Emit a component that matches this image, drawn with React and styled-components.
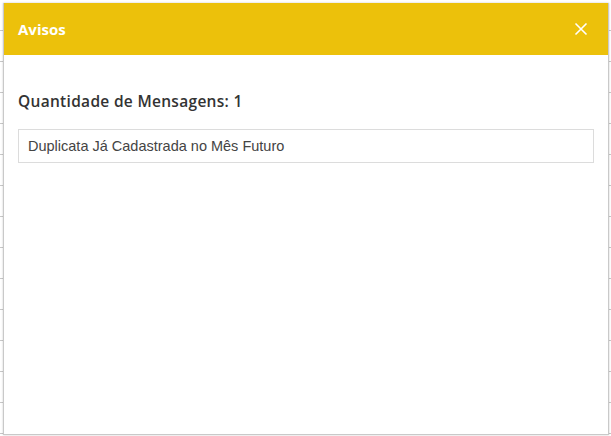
import React from 'react'
import styled, { createGlobalStyle } from 'styled-components'

const Global = createGlobalStyle`
  html, body {
    margin: 0;
    padding: 0;
    background: #ffffff;
  }
  * { box-sizing: border-box; }
`;

const Backdrop = styled.div`
  width: 611px;
  height: 436px;
  padding: 3px 2px 1px 3px;
  background: repeating-linear-gradient(
    to bottom,
    #ffffff 0px,
    #ffffff 30px,
    #c8c8c8 30px,
    #c8c8c8 31px
  );
`;

const Modal = styled.div`
  height: 100%;
  display: flex;
  flex-direction: column;
  background: #ffffff;
  border: 1px solid #c9c9c9;
  border-top: none;
  box-shadow: 0 0 2px rgba(0, 0, 0, 0.2);
`;

const Header = styled.div`
  height: 52px;
  flex: none;
  display: flex;
  align-items: center;
  justify-content: space-between;
  padding: 0 20px 0 14px;
  background: #ecc10b;
`;

const Title = styled.h4`
  margin: 0;
  font-family: "Open Sans", "Liberation Sans", sans-serif;
  font-weight: 700;
  font-size: 15px;
  color: #ffffff;
`;

const Close = styled.button`
  border: none;
  background: transparent;
  padding: 0;
  width: 14px;
  height: 14px;
  display: flex;
  cursor: pointer;
`;

const Body = styled.div`
  padding: 35px 14px 0 14px;
  display: flex;
  flex-direction: column;
  gap: 17px;
`;

const Count = styled.div`
  font-family: "Open Sans", "Liberation Sans", sans-serif;
  font-weight: 600;
  font-size: 15.5px;
  color: #333333;
  line-height: 22px;
  letter-spacing: 0.3px;
`;

const Message = styled.div`
  height: 34px;
  display: flex;
  align-items: center;
  padding: 0 9px;
  border: 1px solid #dcdcdc;
  font-family: "Liberation Sans", Arial, sans-serif;
  font-size: 14.5px;
  color: #444444;
`;

export default function App() {
  return (
    <>
      <Global />
      <Backdrop>
        <Modal>
          <Header>
            <Title>Avisos</Title>
            <Close aria-label="Fechar">
              <svg width="14" height="14" viewBox="0 0 14 14">
                <path d="M1.5 1.5 L12.5 12.5 M12.5 1.5 L1.5 12.5" stroke="#fff" strokeWidth="1.6" />
              </svg>
            </Close>
          </Header>
          <Body>
            <Count>Quantidade de Mensagens: 1</Count>
            <Message>Duplicata Já Cadastrada no Mês Futuro</Message>
          </Body>
        </Modal>
      </Backdrop>
    </>
  )
}
